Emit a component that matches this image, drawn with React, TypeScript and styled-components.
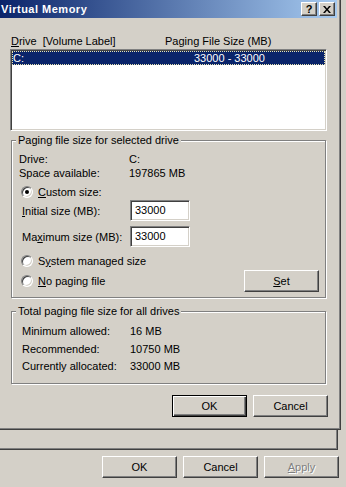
import React from "react";
import styled, { createGlobalStyle } from "styled-components";

const face = "#d4d0c8";

const GlobalStyle = createGlobalStyle`
  html, body {
    margin: 0;
    padding: 0;
    background: ${face};
  }
  body {
    font-family: "Liberation Sans", Arial, sans-serif;
    font-size: 11px;
    color: #000;
  }
`;

const Screen = styled.div`
  width: 346px;
  height: 487px;
  overflow: hidden;
  display: flex;
  flex-direction: column;
`;

const Dialog = styled.div`
  box-sizing: border-box;
  width: 341px;
  height: 430px;
  padding: 0 3px 3px 0;
  border-right: 1px solid #404040;
  border-bottom: 1px solid #404040;
  box-shadow: inset -1px -1px 0 #808080;
  display: flex;
  flex-direction: column;
`;

const TitleBar = styled.div`
  height: 18px;
  display: flex;
  align-items: center;
  padding: 0 2px 0 1px;
  background: linear-gradient(to right, #0a246a, #a6caf0);
  color: #fff;
  font-weight: bold;
  font-size: 11px;
`;

const TitleText = styled.span`
  flex: 1;
  letter-spacing: 0.5px;
`;

const TitleButtons = styled.div`
  display: flex;
  gap: 2px;
`;

const TitleButton = styled.div`
  box-sizing: border-box;
  width: 16px;
  height: 14px;
  background: ${face};
  border: 1px solid;
  border-color: #fff #404040 #404040 #fff;
  box-shadow: inset -1px -1px 0 #808080;
  display: flex;
  align-items: center;
  justify-content: center;
  color: #000;
  font-weight: bold;
  font-size: 11px;
  line-height: 1;
`;

const Content = styled.div`
  padding-left: 10px;
  display: flex;
  flex-direction: column;
`;

const ColumnHeader = styled.div`
  margin-top: 17px;
  height: 13px;
  line-height: 13px;
  display: flex;
`;

const HeaderCell = styled.span<{ $w?: number }>`
  padding-left: 1px;
  width: ${(p) => (p.$w ? `${p.$w}px` : "auto")};
`;

const ListBox = styled.div`
  box-sizing: border-box;
  margin-top: 1px;
  width: 317px;
  height: 82px;
  padding: 1px;
  background: #fff;
  border: 1px solid;
  border-color: #808080 #fff #fff #808080;
  box-shadow: inset 1px 1px 0 #404040, inset -1px -1px 0 ${face};
`;

const ListRow = styled.div<{ $selected?: boolean }>`
  box-sizing: border-box;
  height: 14px;
  line-height: 12px;
  display: flex;
  background: ${(p) => (p.$selected ? "#0a246a" : "transparent")};
  color: ${(p) => (p.$selected ? "#fff" : "#000")};
  border: 1px dotted ${(p) => (p.$selected ? "#e8e4b0" : "transparent")};
`;

const ListCell = styled.span<{ $w?: number }>`
  width: ${(p) => (p.$w ? `${p.$w}px` : "auto")};
`;

const Group = styled.fieldset<{ $mt: number }>`
  box-sizing: border-box;
  margin: ${(p) => p.$mt}px 0 0 1px;
  width: 315px;
  min-width: 0;
  padding: 0;
  border: 1px solid #808080;
  box-shadow: inset 1px 1px 0 #fff, 1px 1px 0 #fff;
`;

const Legend = styled.legend`
  margin-left: 4px;
  padding: 0 2px;
  height: 13px;
  line-height: 13px;
  background: ${face};
`;

const GroupBody = styled.div<{ $pad: string }>`
  padding: ${(p) => p.$pad};
  display: flex;
  flex-direction: column;
`;

const InfoRow = styled.div<{ $col: number; $mt?: number }>`
  display: grid;
  grid-template-columns: ${(p) => p.$col}px 1fr;
  height: 14px;
  line-height: 14px;
  margin-top: ${(p) => p.$mt ?? 0}px;
`;

const RadioRow = styled.div<{ $mt: number; $h?: number }>`
  display: flex;
  align-items: center;
  height: ${(p) => p.$h ?? 14}px;
  margin-top: ${(p) => p.$mt}px;
  padding-left: 2px;
`;

const RadioLabel = styled.span`
  margin-left: 5px;
  flex: 1;
`;

const RadioCircle = styled.span<{ $checked?: boolean }>`
  box-sizing: border-box;
  width: 12px;
  height: 12px;
  border-radius: 50%;
  border: 1px solid;
  border-color: #808080 #fff #fff #808080;
  box-shadow: inset 1px 1px 0 #404040, inset -1px -1px 0 ${face};
  background: #fff;
  display: flex;
  align-items: center;
  justify-content: center;
  &::after {
    content: "";
    width: 4px;
    height: 4px;
    border-radius: 50%;
    background: ${(p) => (p.$checked ? "#000" : "transparent")};
  }
`;

const InputRow = styled.div<{ $mt: number }>`
  display: grid;
  grid-template-columns: 108px 60px;
  align-items: center;
  height: 21px;
  margin-top: ${(p) => p.$mt}px;
  padding-left: 3px;
`;

const TextBox = styled.div`
  box-sizing: border-box;
  height: 21px;
  padding: 3px 0 0 4px;
  background: #fff;
  border: 1px solid;
  border-color: #808080 #fff #fff #808080;
  box-shadow: inset 1px 1px 0 #404040, inset -1px -1px 0 ${face};
  line-height: 13px;
`;

const Button = styled.div<{ $default?: boolean; $disabled?: boolean }>`
  box-sizing: border-box;
  width: 75px;
  height: 22px;
  background: ${face};
  display: flex;
  align-items: center;
  justify-content: center;
  border: 1px solid;
  border-color: ${(p) =>
    p.$default ? "#000" : "#fff #404040 #404040 #fff"};
  box-shadow: ${(p) =>
    p.$default
      ? "inset 1px 1px 0 #fff, inset -1px -1px 0 #404040, inset -2px -2px 0 #808080"
      : "inset -1px -1px 0 #808080"};
  color: ${(p) => (p.$disabled ? "#808080" : "#000")};
  text-shadow: ${(p) => (p.$disabled ? "1px 1px 0 #fff" : "none")};
`;

const ButtonRow = styled.div<{ $mt: number; $pr: number }>`
  display: flex;
  justify-content: flex-end;
  gap: 6px;
  margin-top: ${(p) => p.$mt}px;
  padding-right: ${(p) => p.$pr}px;
`;

const TabPanel = styled.div`
  box-sizing: border-box;
  width: 338px;
  height: 20px;
  border-right: 1px solid #404040;
  border-bottom: 1px solid #404040;
  box-shadow: inset -1px -1px 0 #808080;
`;

const Key = styled.u`
  text-decoration: underline;
`;

const CloseIcon = () => (
  <svg width="8" height="7" viewBox="0 0 8 7">
    <path d="M0 0h2l2 2.5L6 0h2L5 3.5 8 7H6L4 4.5 2 7H0l3-3.5z" fill="#000" />
  </svg>
);

export default function App() {
  return (
    <>
      <GlobalStyle />
      <Screen>
        <Dialog>
          <TitleBar>
            <TitleText>Virtual Memory</TitleText>
            <TitleButtons>
              <TitleButton>?</TitleButton>
              <TitleButton>
                <CloseIcon />
              </TitleButton>
            </TitleButtons>
          </TitleBar>
          <Content>
            <ColumnHeader>
              <HeaderCell $w={153}>
                <Key>D</Key>rive&nbsp; [Volume Label]
              </HeaderCell>
              <HeaderCell>Paging File Size (MB)</HeaderCell>
            </ColumnHeader>
            <ListBox>
              <ListRow $selected>
                <ListCell $w={181}>C:</ListCell>
                <ListCell>33000 - 33000</ListCell>
              </ListRow>
            </ListBox>

            <Group $mt={3}>
              <Legend>Paging file size for selected drive</Legend>
              <GroupBody $pad="5px 6px 5px 7px">
                <InfoRow $col={110}>
                  <span>Drive:</span>
                  <span>C:</span>
                </InfoRow>
                <InfoRow $col={110}>
                  <span>Space available:</span>
                  <span>197865 MB</span>
                </InfoRow>
                <RadioRow $mt={5}>
                  <RadioCircle $checked />
                  <RadioLabel>
                    <Key>C</Key>ustom size:
                  </RadioLabel>
                </RadioRow>
                <InputRow $mt={1}>
                  <span>
                    <Key>I</Key>nitial size (MB):
                  </span>
                  <TextBox>33000</TextBox>
                </InputRow>
                <InputRow $mt={5}>
                  <span>
                    Ma<Key>x</Key>imum size (MB):
                  </span>
                  <TextBox>33000</TextBox>
                </InputRow>
                <RadioRow $mt={7}>
                  <RadioCircle />
                  <RadioLabel>
                    S<Key>y</Key>stem managed size
                  </RadioLabel>
                </RadioRow>
                <RadioRow $mt={2} $h={22}>
                  <RadioCircle />
                  <RadioLabel>
                    <Key>N</Key>o paging file
                  </RadioLabel>
                  <Button>
                    <span>
                      <Key>S</Key>et
                    </span>
                  </Button>
                </RadioRow>
              </GroupBody>
            </Group>

            <Group $mt={7}>
              <Legend>Total paging file size for all drives</Legend>
              <GroupBody $pad="6px 6px 10px 10px">
                <InfoRow $col={108}>
                  <span>Minimum allowed:</span>
                  <span>16 MB</span>
                </InfoRow>
                <InfoRow $col={108} $mt={4}>
                  <span>Recommended:</span>
                  <span>10750 MB</span>
                </InfoRow>
                <InfoRow $col={108} $mt={3}>
                  <span>Currently allocated:</span>
                  <span>33000 MB</span>
                </InfoRow>
              </GroupBody>
            </Group>
          </Content>
          <ButtonRow $mt={11} $pr={9}>
            <Button $default>OK</Button>
            <Button>Cancel</Button>
          </ButtonRow>
        </Dialog>
        <TabPanel />
        <ButtonRow $mt={6} $pr={7}>
          <Button>OK</Button>
          <Button>Cancel</Button>
          <Button $disabled>
            <span>
              <Key>A</Key>pply
            </span>
          </Button>
        </ButtonRow>
      </Screen>
    </>
  );
}
